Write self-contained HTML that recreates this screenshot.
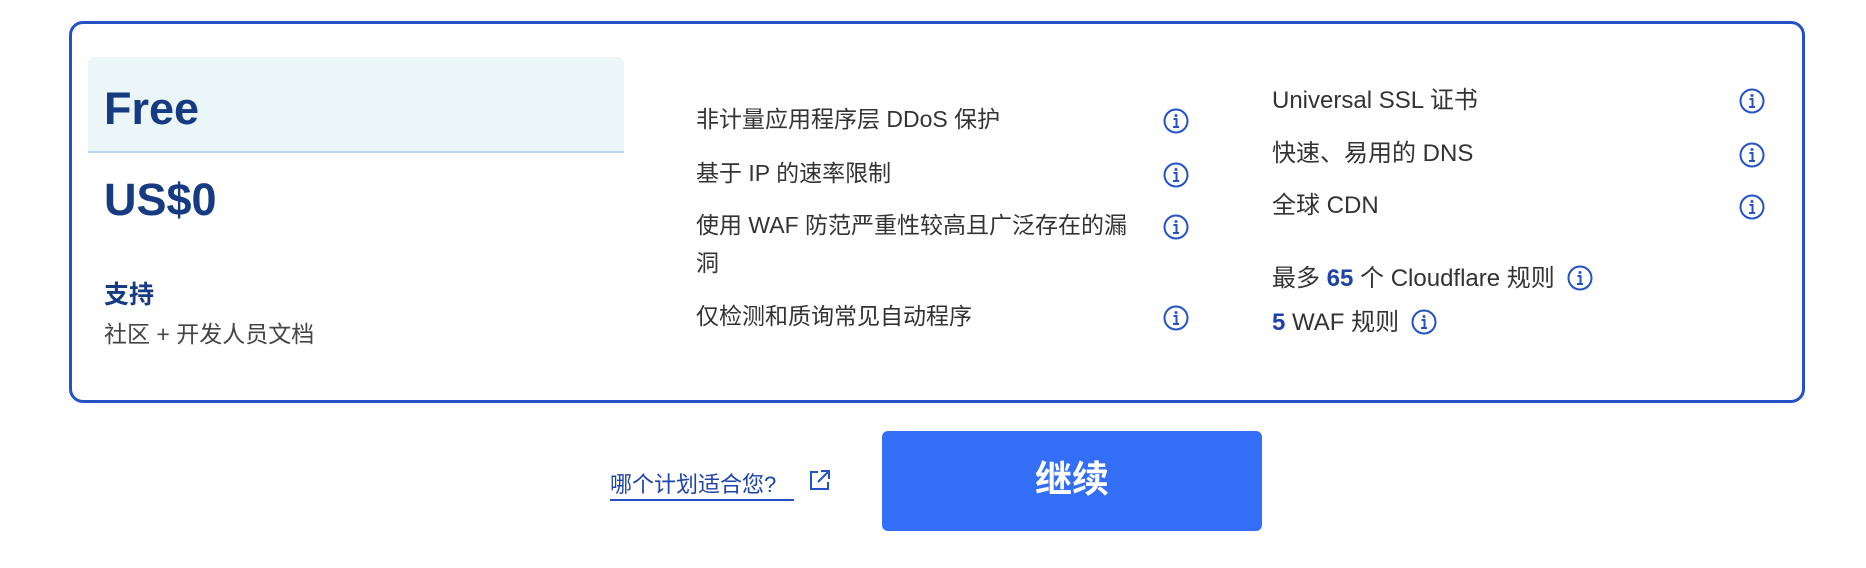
<!DOCTYPE html>
<html><head><meta charset="utf-8"><style>
*{margin:0;padding:0;box-sizing:border-box}
body{width:1866px;height:568px;background:#fff;font-family:"Liberation Sans","Noto Sans CJK SC",sans-serif;position:relative;overflow:hidden;color:#333}
.card{position:absolute;left:69px;top:21px;width:1736px;height:382px;border:3.5px solid #2352c6;border-radius:14px}
.panel{position:absolute;left:88px;top:57px;width:536px;height:96px;background:#eaf6f8;border-bottom:2px solid #bcd6f5;border-radius:6px 6px 0 0}
.t{position:absolute;white-space:nowrap}
.big{font-size:45px;font-weight:bold;color:#163b82;line-height:1}
.f{font-size:23px;color:#333;line-height:1}
.r{font-size:24px}
.i{position:absolute;width:26px;height:26px}
.ii{width:26px;height:26px;vertical-align:-5px;margin-left:12px}
b{color:#1d43a8}
</style></head><body>
<div class="card"></div>
<div class="panel"></div>
<div class="t big" style="left:104px;top:86px">Free</div>
<div class="t big" style="left:104px;top:177px">US$0</div>
<div class="t" style="left:104px;top:283px;font-size:25px;font-weight:bold;color:#163b82;line-height:1">支持</div>
<div class="t f" style="left:104px;top:323px;color:#444">社区 + 开发人员文档</div>

<div class="t f" style="left:696px;top:108px">非计量应用程序层 DDoS 保护</div>
<div class="t f" style="left:696px;top:162px">基于 IP 的速率限制</div>
<div class="t f" style="left:696px;top:214px">使用 WAF 防范严重性较高且广泛存在的漏</div>
<div class="t f" style="left:696px;top:252px">洞</div>
<div class="t f" style="left:696px;top:305px">仅检测和质询常见自动程序</div>

<svg width="0" height="0" style="position:absolute"><defs><symbol id="ic" viewBox="0 0 26 26"><circle cx="13" cy="13" r="11.5" fill="none" stroke="#2352c6" stroke-width="2"/><circle cx="13" cy="7.5" r="1.5" fill="#2352c6"/><path d="M10.5 11h3v8M10 19h6" fill="none" stroke="#2352c6" stroke-width="2"/></symbol></defs></svg>

<div class="t f r" style="left:1272px;top:89px">Universal SSL 证书</div>
<div class="t f r" style="left:1272px;top:142px">快速、易用的 DNS</div>
<div class="t f r" style="left:1272px;top:194px">全球 CDN</div>
<div class="t f r" style="left:1272px;top:265px">最多 <b>65</b> 个 Cloudflare 规则<svg class="ii"><use href="#ic"/></svg></div>
<div class="t f r" style="left:1272px;top:309px"><b>5</b> WAF 规则<svg class="ii"><use href="#ic"/></svg></div>

<svg class="i" style="left:1163px;top:108px"><use href="#ic"/></svg>
<svg class="i" style="left:1163px;top:162px"><use href="#ic"/></svg>
<svg class="i" style="left:1163px;top:214px"><use href="#ic"/></svg>
<svg class="i" style="left:1163px;top:305px"><use href="#ic"/></svg>
<svg class="i" style="left:1739px;top:88px"><use href="#ic"/></svg>
<svg class="i" style="left:1739px;top:142px"><use href="#ic"/></svg>
<svg class="i" style="left:1739px;top:194px"><use href="#ic"/></svg>

<div class="t" style="left:610px;top:474px;font-size:22px;color:#1d43a8;line-height:1">哪个计划适合您?</div>
<div style="position:absolute;left:610px;top:499px;width:184px;height:2px;background:#2352c6"></div>
<svg style="position:absolute;left:809px;top:469px" width="22" height="22" viewBox="0 0 22 22" fill="none" stroke="#2352c6" stroke-width="2"><path d="M9 3H2v17h17v-7M12 2h8v8M20 2 9 13"/></svg>

<div style="position:absolute;left:882px;top:431px;width:380px;height:100px;background:#336ef6;border-radius:6px;color:#fff;font-size:37px;font-weight:bold;text-align:center;line-height:98px">继续</div>
</body></html>
